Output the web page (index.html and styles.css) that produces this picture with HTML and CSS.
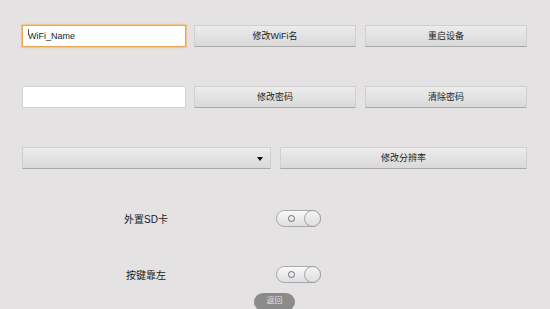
FILE: index.html
```html
<!DOCTYPE html>
<html>
<head>
<meta charset="utf-8">
<link rel="stylesheet" href="styles.css">
</head>
<body>
<div class="page">
  <div class="row">
    <div class="input focused"><span class="caret"></span>WiFi_Name</div>
    <div class="btn">修改WiFi名</div>
    <div class="btn">重启设备</div>
  </div>
  <div class="row">
    <div class="input"></div>
    <div class="btn">修改密码</div>
    <div class="btn">清除密码</div>
  </div>
  <div class="row row3">
    <div class="select"><span class="arrow"></span></div>
    <div class="btn wide">修改分辨率</div>
  </div>
  <div class="switch-row first">
    <div class="label">外置SD卡</div>
    <div class="toggle"><span class="ring"></span><span class="knob"></span></div>
  </div>
  <div class="switch-row">
    <div class="label">按键靠左</div>
    <div class="toggle"><span class="ring"></span><span class="knob"></span></div>
  </div>
  <div class="back-wrap"><div class="back">返回</div></div>
</div>
</body>
</html>
```
FILE: styles.css
```css
html, body {
  margin: 0;
  padding: 0;
  background: #e4e2e3;
  width: 550px;
  height: 309px;
  overflow: hidden;
  font-family: "Liberation Sans", "Noto Sans CJK SC", sans-serif;
  color: #2a2a2a;
}
.page {
  padding: 25px 23px 0 22px;
  display: flex;
  flex-direction: column;
}
.row {
  display: flex;
  height: 22px;
  margin-bottom: 39px;
}
.row3 {
  margin-bottom: 40px;
}
.input {
  box-sizing: border-box;
  width: 164px;
  height: 22px;
  background: #fff;
  border: 1px solid #d2d2d2;
  font-size: 9px;
  line-height: 20px;
  padding-left: 5px;
  color: #222;
  position: relative;
}
.input.focused {
  border: 1px solid #e9a45a;
  box-shadow: 0 0 1px 1px #f3c58f;
}
.caret {
  position: absolute;
  left: 5px;
  top: 3px;
  width: 1px;
  height: 6px;
  background: #555;
}
.btn {
  box-sizing: border-box;
  width: 162px;
  height: 22px;
  margin-left: 8px;
  background: linear-gradient(#ececec, #d9d9d9);
  border: 1px solid #d0d0d0;
  border-bottom: 1px solid #a9a9a9;
  font-size: 9px;
  line-height: 20px;
  text-align: center;
  color: #222;
}
.btn + .btn {
  margin-left: 9px;
}
.select {
  box-sizing: border-box;
  width: 249px;
  height: 22px;
  background: linear-gradient(#ececec, #d9d9d9);
  border: 1px solid #d0d0d0;
  border-bottom: 1px solid #a9a9a9;
  position: relative;
}
.arrow {
  position: absolute;
  right: 7px;
  top: 9px;
  width: 0;
  height: 0;
  border-left: 3px solid transparent;
  border-right: 3px solid transparent;
  border-top: 4px solid #111;
}
.btn.wide {
  width: 247px;
  margin-left: 9px;
}
.switch-row {
  display: flex;
  align-items: center;
  height: 17px;
  margin-bottom: 39px;
}
.switch-row.first {
  margin-top: 1px;
}
.label {
  width: 248px;
  text-align: center;
  font-size: 10px;
  color: #1a1a1a;
}
.toggle {
  box-sizing: border-box;
  margin-left: 6px;
  width: 45px;
  height: 17px;
  border-radius: 9px;
  border: 1px solid #a8a8a8;
  background: linear-gradient(#fafafa, #dcdde2);
  position: relative;
}
.ring {
  position: absolute;
  left: 11px;
  top: 4px;
  width: 5px;
  height: 5px;
  border-radius: 50%;
  border: 1px solid #6d6d6d;
}
.knob {
  position: absolute;
  right: -1px;
  top: -1px;
  width: 17px;
  height: 17px;
  box-sizing: border-box;
  border-radius: 50%;
  border: 1px solid #a0a0a0;
  background: linear-gradient(#f4f4f4, #dedee2);
}
.switch-row + .switch-row {
  margin-bottom: 10px;
}
.back-wrap {
  display: flex;
  justify-content: center;
}
.back {
  width: 41px;
  height: 18px;
  border-radius: 9px;
  background: #8b8b8b;
  color: #e0e0e0;
  font-size: 8px;
  line-height: 16px;
  text-align: center;
}
```
